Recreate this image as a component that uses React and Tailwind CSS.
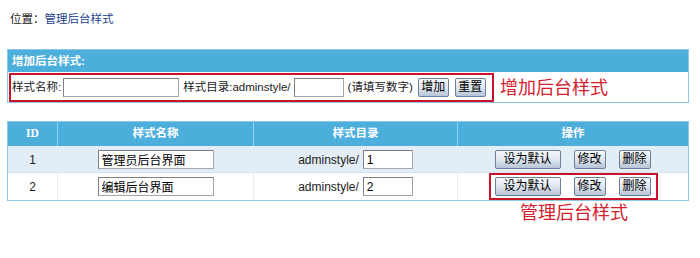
import React from 'react'

const font = { fontFamily: '"Liberation Sans", "Noto Sans CJK SC", sans-serif' }

function Btn({ children, w }) {
  return (
    <button
      className={`h-[19px] ${w} border border-[#6f7f96] rounded-[2px] bg-linear-to-b from-[#f7f9fc] via-[#dfe6ef] to-[#b7c5d8] text-[12px] leading-[17px] text-black flex items-center justify-center shrink-0`}
    >
      {children}
    </button>
  )
}

function Field({ w, value }) {
  return (
    <input
      readOnly
      value={value || ''}
      className={`h-[19px] ${w} border border-[#a5a5a5] border-t-[#808080] border-l-[#808080] bg-white px-[3px] text-[12px] text-black outline-none shrink-0`}
      style={font}
    />
  )
}

const rows = [
  { id: 1, name: '管理员后台界面', dir: '1', bg: 'bg-[#e3edf6]' },
  { id: 2, name: '编辑后台界面', dir: '2', bg: 'bg-white' },
]

export default function App() {
  return (
    <div className="w-[700px] h-[258px] bg-white px-[7px] pt-[12px] text-[11.5px] text-[#222]" style={font}>
      <div className="h-[14px] leading-[14px] pl-[3px]">
        位置：<span className="text-[#1d3f8c]">管理后台样式</span>
      </div>

      <div className="mt-[23px] w-[682px] border border-[#8ec6e6]">
        <div className="h-[22px] bg-[#4caedb] text-white font-bold pl-[4px] leading-[22px]">增加后台样式:</div>
        <div className="flex items-center pl-[1px] pt-[1px] h-[30px] items-start">
          <div className="w-[485px] h-[29px] border-2 border-[#c8142b] flex items-center pl-[1px]">
            <span>样式名称:</span>
            <div className="ml-[2px]"><Field w="w-[116px]" /></div>
            <span className="ml-[4px]">样式目录:adminstyle/</span>
            <div className="ml-[3px]"><Field w="w-[50px]" /></div>
            <span className="ml-[4px]">(请填写数字)</span>
            <div className="ml-[5px]"><Btn w="w-[31px]">增加</Btn></div>
            <div className="ml-[6px]"><Btn w="w-[31px]">重置</Btn></div>
          </div>
          <div className="self-center ml-[6px] text-[18px] leading-[20px] text-[#d4202c]">增加后台样式</div>
        </div>
      </div>

      <div className="mt-[18px] w-[682px] border border-[#8ec6e6]">
        <div className="grid grid-cols-[49px_196px_204px_231px] h-[24px] bg-[#4caedb] text-white font-bold">
          <div className="flex items-center justify-center" style={{ fontFamily: '"Liberation Serif", serif' }}>ID</div>
          <div className="flex items-center justify-center border-l border-[#93d2f0]">样式名称</div>
          <div className="flex items-center justify-center border-l border-[#93d2f0]">样式目录</div>
          <div className="flex items-center justify-center border-l border-[#93d2f0]">操作</div>
        </div>
        {rows.map((r, i) => (
          <div
            key={r.id}
            className={`grid grid-cols-[49px_196px_204px_231px] h-[27px] ${r.bg} ${i === 0 ? 'border-b border-[#d5e4f0]' : ''}`}
          >
            <div className="flex items-center justify-center text-[12px]">{r.id}</div>
            <div className="flex items-center justify-center border-l border-[#e4edf5]">
              <Field w="w-[116px]" value={r.name} />
            </div>
            <div className="flex items-center justify-center border-l border-[#e4edf5]">
              <span className="text-[12px]">adminstyle/</span>
              <div className="ml-[4px]"><Field w="w-[50px]" value={r.dir} /></div>
            </div>
            <div className="flex items-center justify-center border-l border-[#e4edf5]">
              <div className={`h-[27px] w-[169px] border-2 ${i === 1 ? 'border-[#c8142b]' : 'border-transparent'} flex items-center pl-[4px]`}>
                <Btn w="w-[66px]">设为默认</Btn>
                <div className="ml-[13px]"><Btn w="w-[32px]">修改</Btn></div>
                <div className="ml-[13px]"><Btn w="w-[32px]">删除</Btn></div>
              </div>
            </div>
          </div>
        ))}
      </div>

      <div className="mt-[2px] ml-[513px] text-[18px] leading-[21px] text-[#d4202c]">管理后台样式</div>
    </div>
  )
}
